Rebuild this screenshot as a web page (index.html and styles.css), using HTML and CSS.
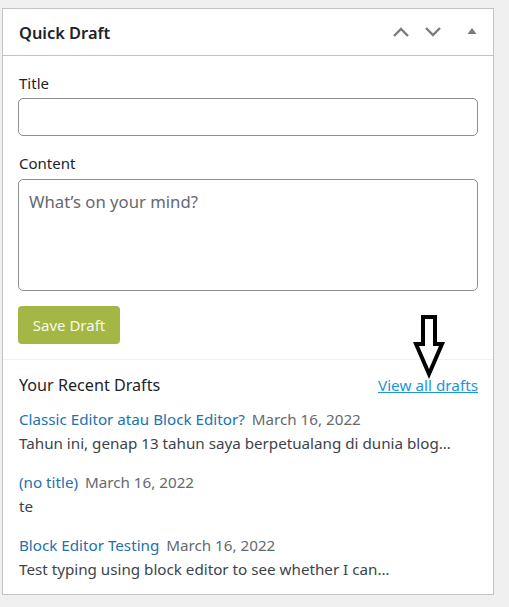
FILE: index.html
```html
<!DOCTYPE html>
<html lang="en">
<head>
<meta charset="utf-8">
<title>Quick Draft</title>
<link rel="stylesheet" href="styles.css">
</head>
<body>
<div class="wrap">
  <div class="postbox">
    <div class="postbox-header">
      <h2 class="hndle">Quick Draft</h2>
      <div class="handle-actions">
        <span class="hbtn hbtn-up"><svg width="18" height="12" viewBox="0 0 18 12"><polyline points="2,10 9,3 16,10" fill="none" stroke="#787c82" stroke-width="2.4"/></svg></span>
        <span class="hbtn hbtn-down"><svg width="18" height="12" viewBox="0 0 18 12"><polyline points="2,2 9,9 16,2" fill="none" stroke="#787c82" stroke-width="2.4"/></svg></span>
        <span class="hbtn hbtn-toggle"><svg width="10" height="8" viewBox="0 0 10 8"><polygon points="0.5,7 5,1 9.5,7" fill="#787c82"/></svg></span>
      </div>
    </div>
    <div class="inside">
      <form class="quick-draft">
        <label class="field-label" for="title">Title</label>
        <input class="field-input" id="title" type="text">
        <label class="field-label field-label-2" for="content">Content</label>
        <textarea class="field-area" id="content" placeholder="What’s on your mind?"></textarea>
        <button type="button" class="save-btn">Save Draft</button>
      </form>
    </div>
    <div class="drafts">
      <div class="drafts-head">
        <h2 class="drafts-title">Your Recent Drafts</h2>
        <a class="view-all" href="#">View all drafts</a>
      </div>
      <ul class="draft-list">
        <li class="draft">
          <div class="draft-title"><a href="#">Classic Editor atau Block Editor?</a> <time>March 16, 2022</time></div>
          <p class="draft-excerpt">Tahun ini, genap 13 tahun saya berpetualang di dunia blog…</p>
        </li>
        <li class="draft">
          <div class="draft-title"><a href="#">(no title)</a> <time>March 16, 2022</time></div>
          <p class="draft-excerpt">te</p>
        </li>
        <li class="draft">
          <div class="draft-title"><a href="#">Block Editor Testing</a> <time>March 16, 2022</time></div>
          <p class="draft-excerpt">Test typing using block editor to see whether I can…</p>
        </li>
      </ul>
    </div>
  </div>
</div>
<svg class="arrow" width="40" height="72" viewBox="0 0 40 72"><polygon points="10,3 22,3 22,30 29,30 16,60 3,30 10,30" fill="none" stroke="#000" stroke-width="4" stroke-linejoin="miter"/></svg>
</body>
</html>
```

FILE: styles.css
```css
html, body {
  margin: 0;
  padding: 0;
  background: #f0f0f1;
}
body {
  font-family: "Noto Sans", "Open Sans", sans-serif;
  color: #3c434a;
  font-size: 15.2px;
  position: relative;
}
.wrap {
  padding: 8px 15px 10px 2px;
}
.postbox {
  width: 492px;
  box-sizing: border-box;
  background: #fff;
  border: 1px solid #c3c4c7;
}
.postbox-header {
  height: 46px;
  box-sizing: content-box;
  border-bottom: 1px solid #c3c4c7;
  display: flex;
  align-items: center;
  justify-content: space-between;
  padding-left: 16px;
}
.hndle {
  margin: 0;
  font-size: 16.4px;
  font-weight: 600;
  color: #1d2327;
}
.handle-actions {
  display: flex;
  height: 46px;
  align-items: center;
}
.hbtn {
  display: flex;
  align-items: center;
  justify-content: center;
  height: 46px;
}
.hbtn-up { width: 29px; }
.hbtn-down { width: 35px; }
.hbtn-toggle { width: 43px; padding-bottom: 3px; box-sizing: border-box; }
.inside {
  padding: 15px 15px 15px 15px;
  border-bottom: 1px solid #f0f0f1;
}
.quick-draft {
  display: flex;
  flex-direction: column;
  align-items: flex-start;
}
.field-label {
  display: block;
  line-height: 24px;
  color: #1d2327;
  margin-bottom: 3px;
  padding-left: 1px;
  font-size: 15px;
}
.field-label-2 {
  margin-top: 15px;
  margin-bottom: 4px;
}
.field-input, .field-area {
  width: 460px;
  box-sizing: border-box;
  border: 1px solid #8c8f94;
  border-radius: 5px;
  background: #fff;
  margin: 0;
  font-family: inherit;
  font-size: 16.7px;
}
.field-input {
  height: 38px;
}
.field-area {
  height: 112px;
  resize: none;
  padding: 10px 10px;
  color: #646970;
}
.field-area::placeholder {
  color: #646970;
  opacity: 1;
}
.save-btn {
  margin-top: 15px;
  width: 102px;
  height: 38px;
  background: #a4b745;
  color: #f6f9ea;
  border: none;
  border-radius: 4px;
  font-family: inherit;
  font-size: 15px;
  padding: 0;
}
.drafts {
  padding: 13px 15px 13px 16px;
}
.drafts-head {
  display: flex;
  justify-content: space-between;
  align-items: baseline;
  margin-bottom: 10px;
}
.drafts-title {
  margin: 0;
  font-size: 16.15px;
  font-weight: 400;
  color: #1d2327;
  line-height: 24px;
}
.view-all {
  color: #1e94db;
  text-decoration: underline;
  font-size: 15.3px;
}
.draft-list {
  list-style: none;
  margin: 0;
  padding: 0;
}
.draft {
  margin-bottom: 15px;
}
.draft:last-child {
  margin-bottom: 0;
}
.draft-title {
  line-height: 24px;
}
.draft-title a {
  color: #2271b1;
  text-decoration: none;
}
.draft-title time {
  color: #646970;
  margin-left: 3px;
}
.draft-excerpt {
  margin: 0;
  line-height: 24px;
  color: #3c434a;
}
.arrow {
  position: absolute;
  left: 413px;
  top: 314px;
}
```
